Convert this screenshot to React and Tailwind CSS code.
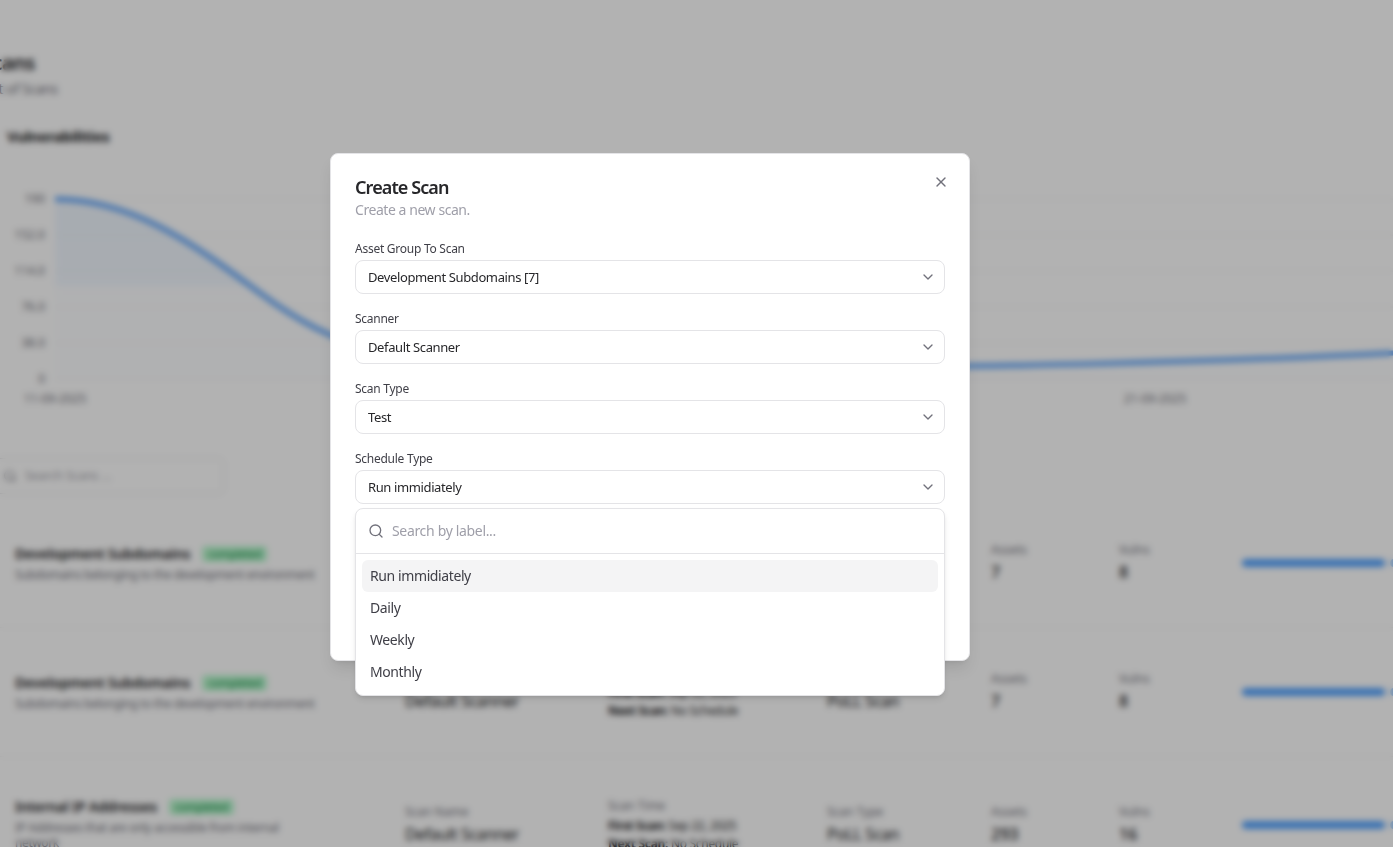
import { ChevronDown, Search, X } from "lucide-react";

const font = { fontFamily: '"Noto Sans", sans-serif' };

const rows = [
  {
    name: "Development Subdomains",
    desc: "Subdomains belonging to the development environment",
    first: "Sep 22, 2025",
    assets: "7",
    vulns: "8",
    height: "h-[129px]",
    leftPad: "",
  },
  {
    name: "Development Subdomains",
    desc: "Subdomains belonging to the development environment",
    first: "Sep 22, 2025",
    assets: "7",
    vulns: "8",
    height: "h-[129px]",
    leftPad: "",
  },
  {
    name: "Internal IP Addresses",
    desc: "IP Addresses that are only accessible from internal network",
    first: "Sep 22, 2025",
    assets: "293",
    vulns: "16",
    height: "h-[137px]",
    leftPad: "pb-[3px]",
  },
];

const fields = [
  { label: "Asset Group To Scan", value: "Development Subdomains [7]" },
  { label: "Scanner", value: "Default Scanner" },
  { label: "Scan Type", value: "Test" },
  { label: "Schedule Type", value: "Run immidiately" },
];

const options = ["Run immidiately", "Daily", "Weekly", "Monthly"];

function Chart() {
  const yTicks = [
    ["190", 198],
    ["152.0", 234],
    ["114.0", 270],
    ["76.0", 306],
    ["38.0", 342],
    ["0", 378],
  ];
  return (
    <svg width="1393" height="260" viewBox="0 160 1393 260" className="block">
      <defs>
        <linearGradient id="fade" x1="0" y1="197" x2="0" y2="300" gradientUnits="userSpaceOnUse">
          <stop offset="0%" stopColor="#60a5fa" stopOpacity="0.1" />
          <stop offset="85%" stopColor="#60a5fa" stopOpacity="0.08" />
          <stop offset="86%" stopColor="#60a5fa" stopOpacity="0.02" />
          <stop offset="100%" stopColor="#60a5fa" stopOpacity="0.01" />
        </linearGradient>
      </defs>
      {yTicks.map(([t, y]) => (
        <g key={t}>
          <line x1="55" x2="1393" y1={y} y2={y} stroke="#f4f4f5" strokeWidth="1" />
          <text x="45" y={y + 4} textAnchor="end" fontSize="12" fill="#71717a">
            {t}
          </text>
        </g>
      ))}
      <path
        d="M55 198 C130 198 190 240 260 292 C330 344 400 372 600 372 L800 368 C1000 365 1200 362 1393 352 L1393 378 L55 378 Z"
        fill="url(#fade)"
      />
      <path
        d="M55 198 C130 198 190 240 260 292 C330 344 400 372 600 372 L800 368 C1000 365 1200 362 1393 352"
        fill="none"
        stroke="#60a5fa"
        strokeWidth="5"
      />
      <text x="55" y="402" textAnchor="middle" fontSize="12" fill="#71717a">
        11-09-2025
      </text>
      <text x="1155" y="402" textAnchor="middle" fontSize="12" fill="#71717a">
        21-09-2025
      </text>
    </svg>
  );
}

function ScanRow({ row }) {
  return (
    <div className={`flex items-center border-b border-zinc-100 pl-[15px] ${row.height}`}>
      <div className={`w-[390px] shrink-0 ${row.leftPad}`}>
        <div className="flex items-center gap-3">
          <span className="text-sm font-semibold tracking-[-0.2px] text-zinc-900">{row.name}</span>
          <span className="rounded bg-green-200 px-1.5 text-[11px] tracking-[-0.2px] text-green-700">completed</span>
        </div>
        <p className="mt-[3px] max-w-[302px] text-xs leading-[15px] tracking-[-0.4px] text-zinc-500">{row.desc}</p>
      </div>
      <div className="w-[203px] shrink-0">
        <p className="text-xs text-zinc-500">Scan Name</p>
        <p className="mt-[2px] text-base tracking-[-0.4px] text-zinc-900">Default Scanner</p>
      </div>
      <div className="w-[219px] shrink-0">
        <p className="text-xs text-zinc-500">Scan Time</p>
        <p className="mt-[3px] text-xs leading-[18px] tracking-[-0.3px] text-zinc-900">
          <b>First Scan:</b> {row.first}
        </p>
        <p className="text-xs leading-[18px] tracking-[-0.3px] text-zinc-900">
          <b>Next Scan:</b> No Schedule
        </p>
      </div>
      <div className="w-[164px] shrink-0">
        <p className="text-xs text-zinc-500">Scan Type</p>
        <p className="mt-[2px] text-base tracking-[-0.4px] text-zinc-900">PoLL Scan</p>
      </div>
      <div className="w-[128px] shrink-0">
        <p className="text-xs text-zinc-500">Assets</p>
        <p className="mt-[2px] text-base font-medium text-zinc-900">{row.assets}</p>
      </div>
      <div className="w-[123px] shrink-0">
        <p className="text-xs text-zinc-500">Vulns</p>
        <p className="mt-[2px] text-base font-medium text-zinc-900">{row.vulns}</p>
      </div>
      <div className="h-2 w-[143px] shrink-0 rounded-full bg-blue-400" />
      <div className="ml-[5px] h-2 w-[20px] shrink-0 rounded-full bg-blue-300" />
    </div>
  );
}

function Field({ label, value }) {
  return (
    <div>
      <label className="block text-xs leading-[16px] tracking-[-0.26px] text-zinc-700">{label}</label>
      <div className="mt-[3px] flex h-[34px] items-center justify-between rounded-lg border border-zinc-200 pl-3 pr-[8px] text-[13px] tracking-[-0.38px] text-zinc-800">
        <span className="pt-px">{value}</span>
        <ChevronDown size={16} className="text-zinc-500" />
      </div>
    </div>
  );
}

export default function App() {
  return (
    <div className="relative h-screen overflow-hidden bg-white" style={font}>
      {/* page behind the dialog */}
      <div className="w-[1393px]">
        <div className="pl-[7px] pt-[50px]">
          <h1 className="-ml-[25px] text-xl font-semibold leading-[26px] tracking-[-0.5px] text-zinc-900">Scans</h1>
          <p className="-ml-[25px] mt-[3px] text-sm leading-[20px] tracking-[-0.4px] text-zinc-500">List of Scans</p>
          <h2 className="mt-[26px] text-[15px] font-bold leading-[22px] tracking-[-0.4px] text-zinc-900">Vulnerabilities</h2>
        </div>
        <div className="mt-[14px]">
          <Chart />
        </div>
        <div className="-ml-[10px] mt-[37px] flex h-9 w-[234px] items-center gap-2 rounded-md border border-zinc-200 px-[12px]">
          <Search size={14} className="text-zinc-500" />
          <span className="text-xs text-zinc-400">Search Scans ...</span>
        </div>
        <div className="mt-[5px]">
          {rows.map((row, i) => (
            <ScanRow key={i} row={row} />
          ))}
        </div>
      </div>

      {/* backdrop */}
      <div className="absolute inset-0 bg-black/30 backdrop-blur-[3px]" />

      {/* dialog */}
      <div className="absolute left-[330px] top-[153px] h-[508px] w-[640px] rounded-lg border border-zinc-200 bg-white px-6 pt-6 shadow-lg">
        <button className="absolute right-[20px] top-[20px] text-zinc-500">
          <X size={16} />
        </button>
        <h2 className="-mt-px text-lg font-semibold leading-[20px] tracking-[-0.9px] text-zinc-800">Create Scan</h2>
        <p className="mt-[3px] text-sm leading-[20px] tracking-[-0.44px] text-zinc-400">Create a new scan.</p>
        <div className="mt-[21px] flex flex-col gap-[17px]">
          {fields.map((f) => (
            <Field key={f.label} label={f.label} value={f.value} />
          ))}
        </div>

        {/* schedule type popover */}
        <div className="absolute left-[24px] top-[354px] w-[590px] rounded-lg border border-zinc-200 bg-white shadow-md">
          <div className="flex h-[45px] items-center gap-2 border-b border-zinc-200 px-3">
            <Search size={16} className="text-zinc-500" />
            <span className="text-sm tracking-[-0.33px] text-zinc-400">Search by label...</span>
          </div>
          <div className="px-1.5 pb-[7px] pt-1.5">
            {options.map((o, i) => (
              <div
                key={o}
                className={`flex h-8 items-center rounded-md px-2 text-sm tracking-[-0.4px] text-zinc-700 ${i === 0 ? "bg-zinc-100" : ""}`}
              >
                {o}
              </div>
            ))}
          </div>
        </div>
      </div>
    </div>
  );
}
